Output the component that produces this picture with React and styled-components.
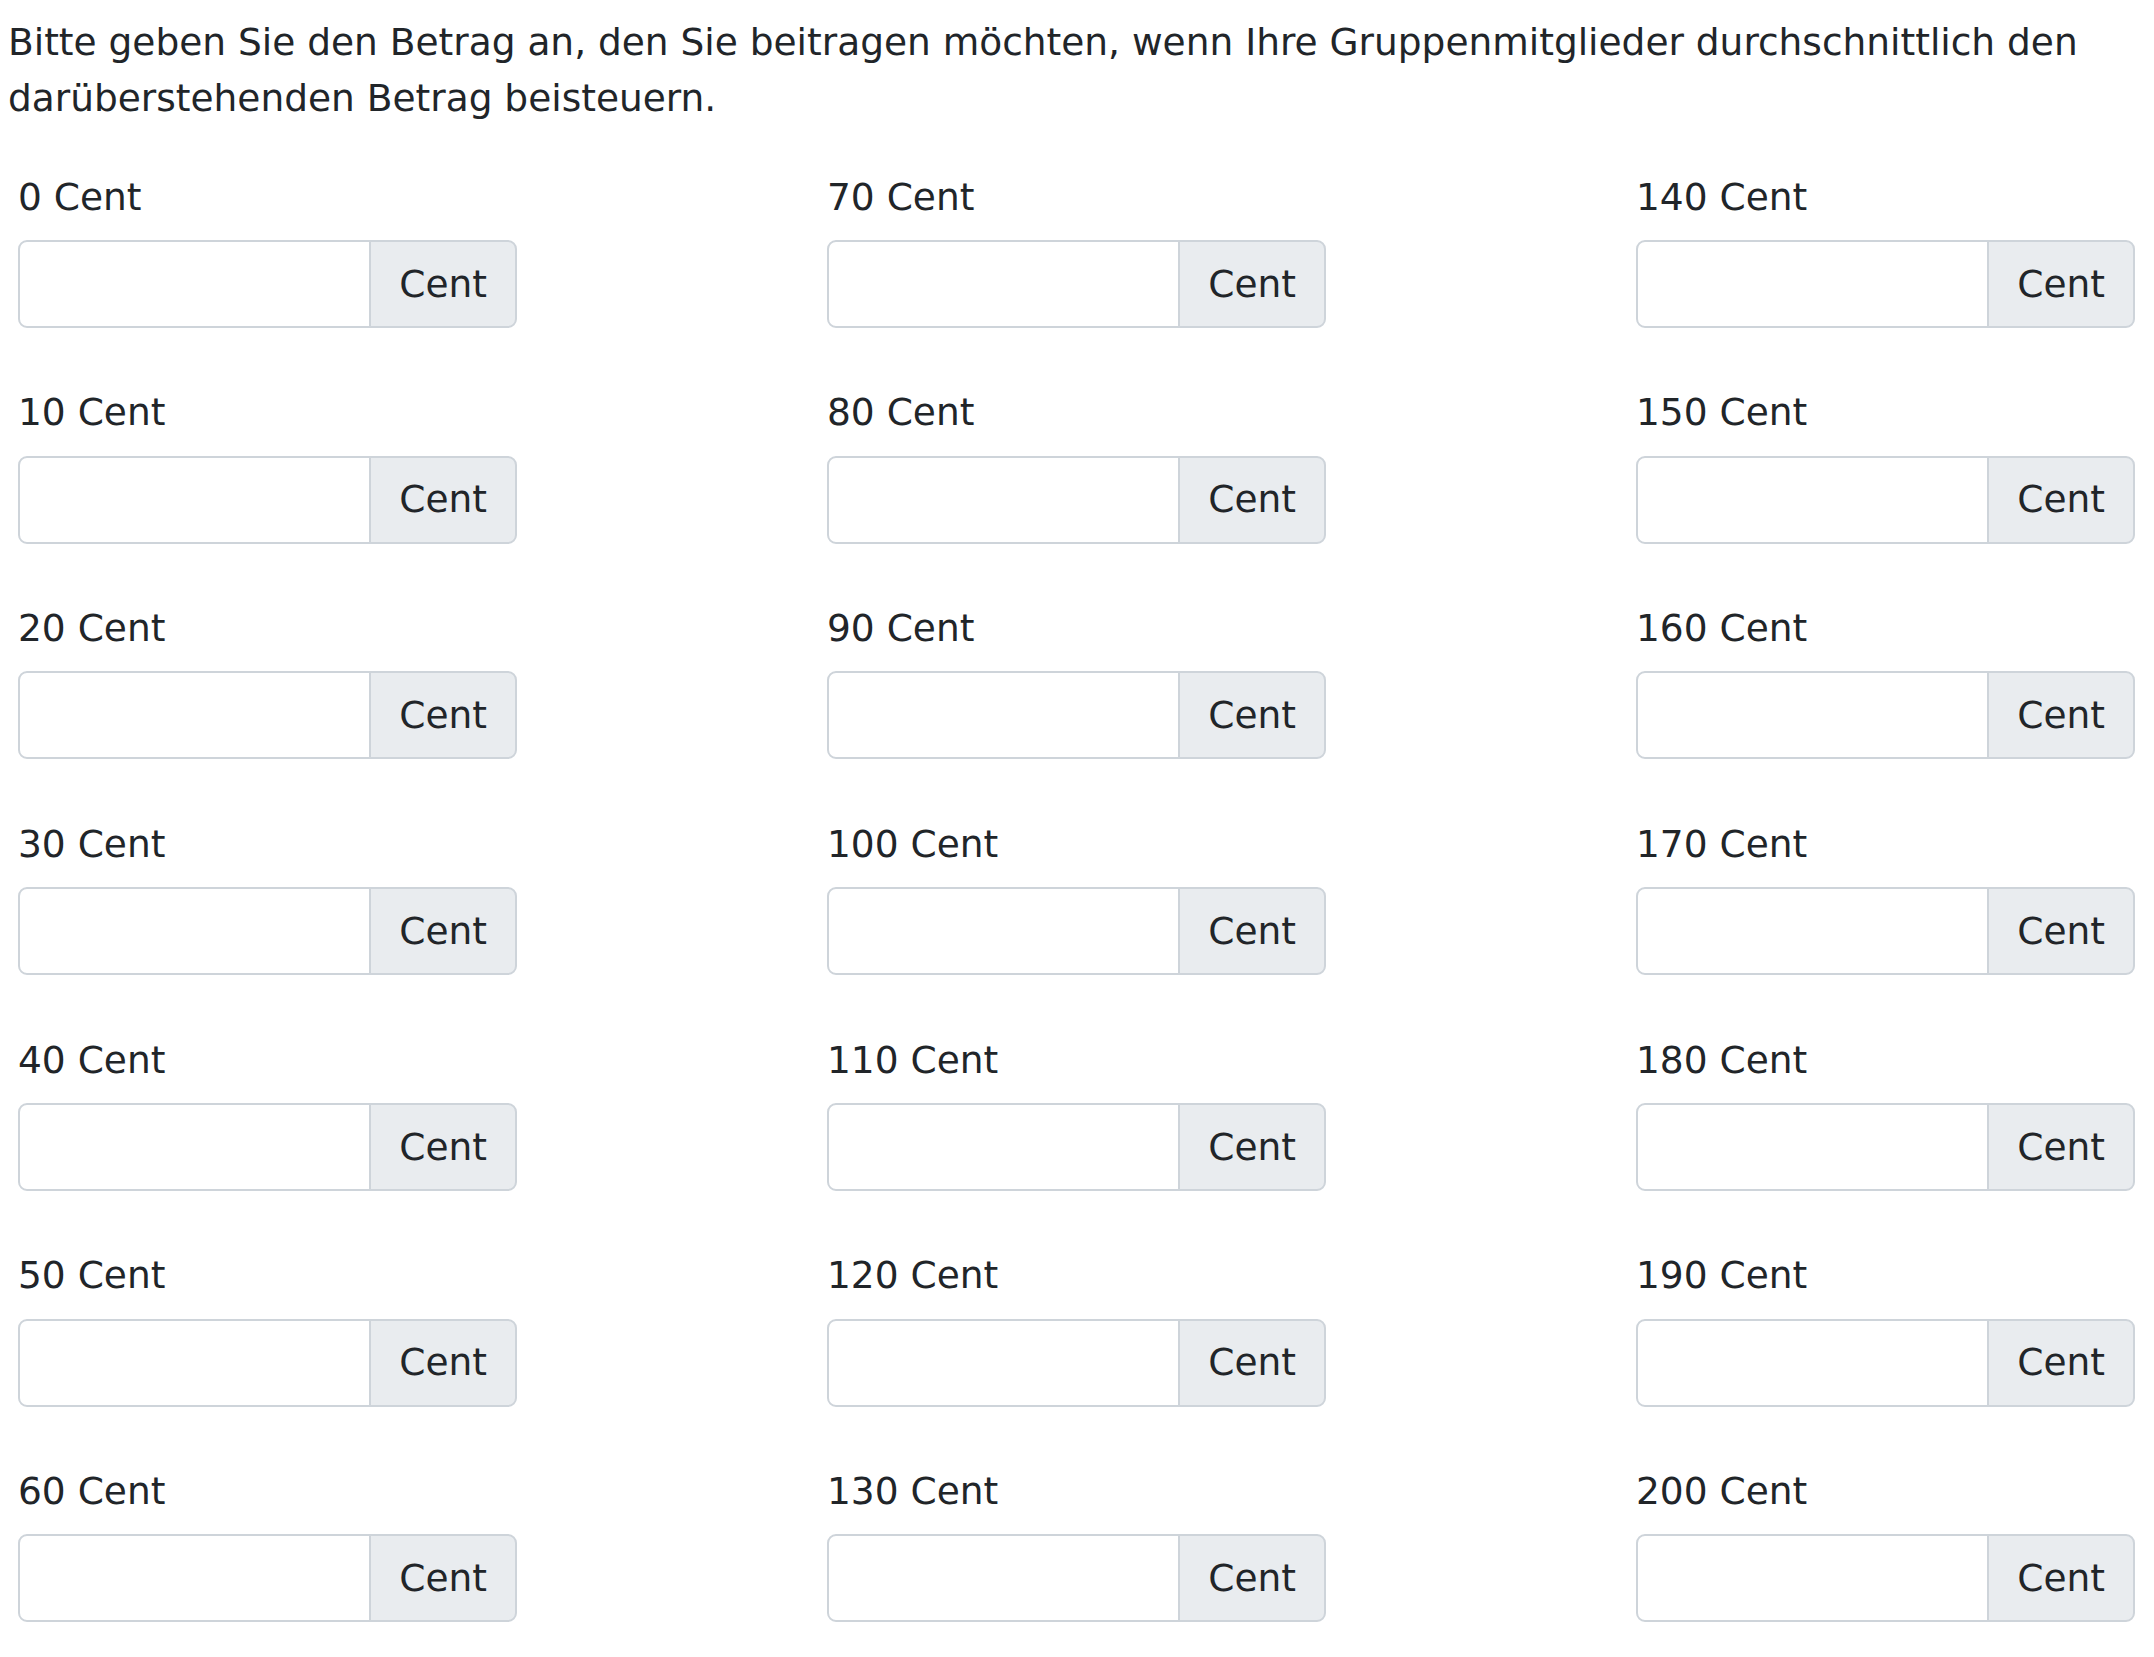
import styled, { createGlobalStyle } from "styled-components";

const GlobalStyle = createGlobalStyle`
  body {
    margin: 0;
    background: #fff;
    color: #212529;
    font-family: "DejaVu Sans", Verdana, sans-serif;
    font-size: 37.5px;
    line-height: 1.5;
  }
  * { box-sizing: border-box; }
`;

const Page = styled.div`
  padding: 14px 8px 30px;
`;

const Intro = styled.p`
  margin: 0 0 42px;
`;

const Grid = styled.div`
  display: grid;
  grid-template-columns: repeat(3, 499px);
  grid-template-rows: repeat(7, auto);
  grid-auto-flow: column;
  column-gap: 310px;
  row-gap: 56.5px;
  padding-left: 10px;
`;

const Field = styled.div`
  display: flex;
  flex-direction: column;
`;

const Label = styled.label`
  display: block;
  margin-bottom: 15px;
`;

const InputGroup = styled.div`
  display: flex;
  height: 88px;
`;

const Input = styled.input`
  flex: 1;
  min-width: 0;
  height: 100%;
  padding: 14px 28px;
  font: inherit;
  color: #495057;
  background: #fff;
  border: 2px solid #ced4da;
  border-radius: 9px 0 0 9px;
  outline: none;
`;

const Addon = styled.span`
  display: flex;
  align-items: center;
  padding: 0 28px;
  margin-left: -2px;
  background: #e9ecef;
  border: 2px solid #ced4da;
  border-radius: 0 9px 9px 0;
  color: #212529;
  white-space: nowrap;
`;

const amounts = Array.from({ length: 21 }, (_, i) => i * 10);

const App = () => {
  return (
    <Page>
      <GlobalStyle />
      <Intro>
        Bitte geben Sie den Betrag an, den Sie beitragen möchten, wenn Ihre
        Gruppenmitglieder durchschnittlich den darüberstehenden Betrag
        beisteuern.
      </Intro>
      <Grid>
        {amounts.map((a) => (
          <Field key={a}>
            <Label htmlFor={"c" + a}>{a} Cent</Label>
            <InputGroup>
              <Input id={"c" + a} type="number" />
              <Addon>Cent</Addon>
            </InputGroup>
          </Field>
        ))}
      </Grid>
    </Page>
  );
};

export default App;
